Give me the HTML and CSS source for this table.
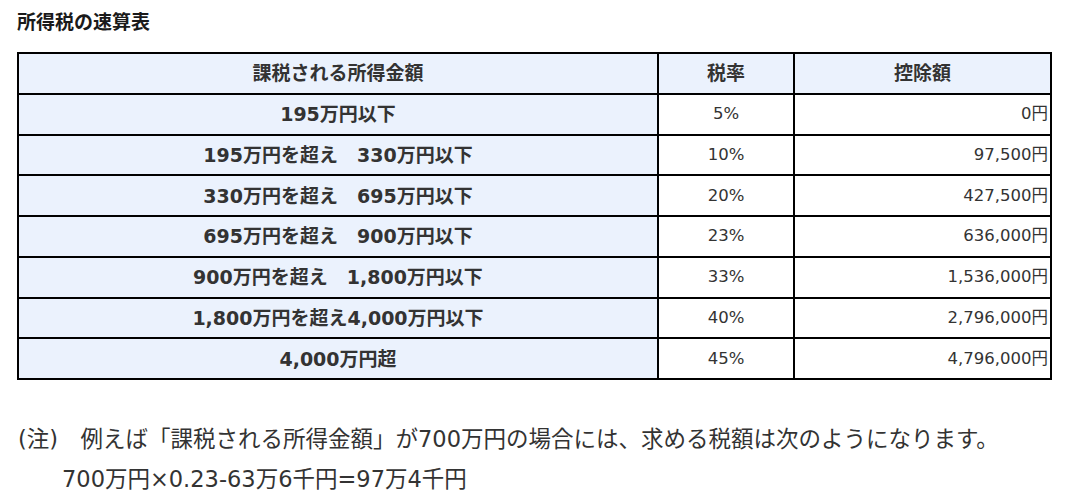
FILE: index.html
```html
<!DOCTYPE html>
<html lang="ja">
<head>
<meta charset="utf-8">
<link rel="stylesheet" href="styles.css">
</head>
<body>
<div class="page">
  <h2 class="title">所得税の速算表</h2>
  <table class="tax">
    <thead>
      <tr><th class="c1">課税される所得金額</th><th class="c2">税率</th><th class="c3">控除額</th></tr>
    </thead>
    <tbody>
      <tr><th>195万円以下</th><td class="rate">5%</td><td class="amt">0円</td></tr>
      <tr><th>195万円を超え　330万円以下</th><td class="rate">10%</td><td class="amt">97,500円</td></tr>
      <tr><th>330万円を超え　695万円以下</th><td class="rate">20%</td><td class="amt">427,500円</td></tr>
      <tr><th>695万円を超え　900万円以下</th><td class="rate">23%</td><td class="amt">636,000円</td></tr>
      <tr><th>900万円を超え　1,800万円以下</th><td class="rate">33%</td><td class="amt">1,536,000円</td></tr>
      <tr><th>1,800万円を超え4,000万円以下</th><td class="rate">40%</td><td class="amt">2,796,000円</td></tr>
      <tr><th>4,000万円超</th><td class="rate">45%</td><td class="amt">4,796,000円</td></tr>
    </tbody>
  </table>
  <p class="note">(注)　例えば「課税される所得金額」が700万円の場合には、求める税額は次のようになります。</p>
  <p class="formula">700万円×0.23-63万6千円=97万4千円</p>
</div>
</body>
</html>
```
FILE: styles.css
```css
html, body {
  margin: 0;
  padding: 0;
  background: #fff;
}
body {
  font-family: "DejaVu Sans", "Noto Sans CJK JP", sans-serif;
  color: #333;
}
.page {
  padding: 0 0 0 17px;
  width: 1036px;
}
.title {
  margin: 0;
  padding: 9px 0 0 0;
  height: 52px;
  box-sizing: border-box;
  font-size: 19px;
  line-height: 26px;
  font-weight: bold;
  color: #1a1a1a;
}
.tax {
  border-collapse: collapse;
  width: 1033px;
  table-layout: fixed;
  font-size: 16.5px;
}
.tax th, .tax td {
  border: 2px solid #000;
  height: 40.75px;
  padding: 0 2px;
  box-sizing: border-box;
  line-height: 22px;
}
.tax th {
  background: #ebf2fd;
  font-weight: bold;
  text-align: center;
  font-size: 19px;
}
.tax .c1 { width: 640px; }
.tax .c2 { width: 136px; }
.tax .c3 { width: 257px; }
.tax td.rate {
  text-align: center;
}
.tax td.amt {
  text-align: right;
}
.note {
  margin: 39px 0 0 1px;
  font-size: 22.5px;
  line-height: 40px;
}
.formula {
  margin: 0 0 0 45px;
  font-size: 22.5px;
  line-height: 40px;
}
```
